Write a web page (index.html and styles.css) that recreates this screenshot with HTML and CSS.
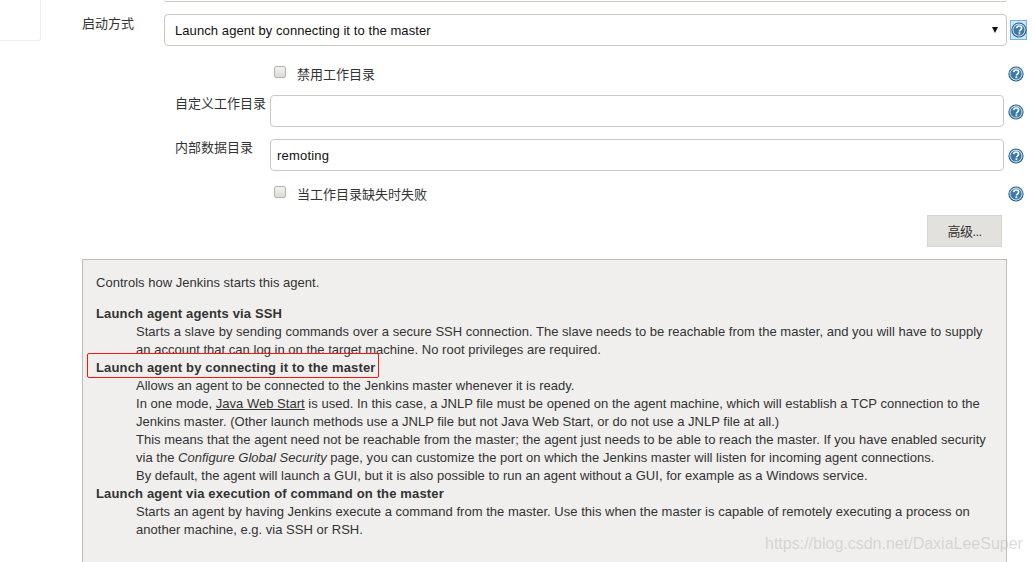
FILE: index.html
```html
<!DOCTYPE html>
<html lang="zh">
<head>
<meta charset="utf-8">
<title>Jenkins agent</title>
<link rel="stylesheet" href="styles.css">
</head>
<body>
<svg class="defs" width="0" height="0" aria-hidden="true">
  <symbol id="help" viewBox="0 0 16 16">
    <circle cx="8" cy="8" r="7.6" fill="#1d5a86"/>
    <circle cx="8" cy="8" r="6.5" fill="#e8f0f5"/>
    <circle cx="8" cy="8" r="5.6" fill="#3a79a8"/>
    <path d="M5.6 6.2C5.8 4.7 6.8 4 8.1 4c1.500 0 2.500 .9 2.500 2.100 0 1-.6 1.500-1.300 2-.6.4-.8.7-.8 1.400" fill="none" stroke="#fff" stroke-width="1.700"/>
    <rect x="7.500" y="10.400" width="1.800" height="1.800" fill="#fff"/>
  </symbol>
</svg>
<div class="page">
  <aside class="side"></aside>
  <main class="main">
    <div class="prev-input"></div>
    <div class="row launch-row">
      <label class="launch-label">启动方式</label>
      <div class="select">
        <span>Launch agent by connecting it to the master</span>
        <span class="caret"></span>
      </div>
      <span class="help-focus"><svg class="help"><use href="#help"/></svg></span>
    </div>
    <div class="sub">
      <div class="row check-row first-check">
        <span class="checkbox"></span>
        <span class="check-text">禁用工作目录</span>
        <svg class="help"><use href="#help"/></svg>
      </div>
      <div class="row field-row custom-row">
        <label class="field-label">自定义工作目录</label>
        <div class="input"></div>
        <svg class="help"><use href="#help"/></svg>
      </div>
      <div class="row field-row data-row">
        <label class="field-label">内部数据目录</label>
        <div class="input">remoting</div>
        <svg class="help"><use href="#help"/></svg>
      </div>
      <div class="row check-row last-check">
        <span class="checkbox"></span>
        <span class="check-text">当工作目录缺失时失败</span>
        <svg class="help"><use href="#help"/></svg>
      </div>
    </div>
    <div class="advanced"><button class="adv-btn">高级...</button></div>
    <section class="help-box">
      <p class="intro">Controls how Jenkins starts this agent.</p>
      <dl class="defs-list">
        <dt>Launch agent agents via SSH</dt>
        <dd>Starts a slave by sending commands over a secure SSH connection. The slave needs to be reachable from the master, and you will have to supply<br>an account that can log in on the target machine. No root privileges are required.</dd>
        <dt class="marked">Launch agent by connecting it to the master</dt>
        <dd>Allows an agent to be connected to the Jenkins master whenever it is ready.<br>
        In one mode, <a href="#">Java Web Start</a> is used. In this case, a JNLP file must be opened on the agent machine, which will establish a TCP connection to the<br>Jenkins master. (Other launch methods use a JNLP file but not Java Web Start, or do not use a JNLP file at all.)<br>
        This means that the agent need not be reachable from the master; the agent just needs to be able to reach the master. If you have enabled security<br>via the <i>Configure Global Security</i> page, you can customize the port on which the Jenkins master will listen for incoming agent connections.<br>
        By default, the agent will launch a GUI, but it is also possible to run an agent without a GUI, for example as a Windows service.</dd>
        <dt>Launch agent via execution of command on the master</dt>
        <dd>Starts an agent by having Jenkins execute a command from the master. Use this when the master is capable of remotely executing a process on<br>another machine, e.g. via SSH or RSH.</dd>
      </dl>
    </section>
  </main>
</div>
<div class="watermark">https://blog.csdn.net/DaxiaLeeSuper</div>
</body>
</html>
```
FILE: styles.css
```css
html, body {
  margin: 0;
  padding: 0;
  height: 562px;
  overflow: hidden;
  background: #fff;
}
body {
  position: relative;
  font-family: "Liberation Sans", "Noto Sans CJK SC", sans-serif;
  font-size: 13px;
  color: #333;
}
.defs { position: absolute; }
.page { display: flex; align-items: flex-start; }
.side {
  width: 40px;
  height: 40px;
  flex: none;
  border-right: 1px solid #eeeeec;
  border-bottom: 1px solid #eeeeec;
  border-bottom-right-radius: 3px;
}
.main {
  margin-left: 41px;
  width: 925px;
  display: flex;
  flex-direction: column;
}
.prev-input {
  margin-left: 82px;
  height: 1px;
  width: 843px;
  border-bottom: 1px solid #ccc9c4;
  border-radius: 0 0 4px 4px;
}
.row { display: flex; }
.launch-row { margin-top: 12px; height: 32px; }
.launch-label {
  width: 82px;
  flex: none;
  padding-top: 1px;
  line-height: 18px;
  font-size: 13px;
}
.select {
  width: 843px;
  flex: none;
  box-sizing: border-box;
  height: 32px;
  border: 1px solid #ccc9c4;
  border-radius: 4px;
  padding: 0 8px 0 10px;
  display: flex;
  align-items: center;
  justify-content: space-between;
  color: #111;
  font-size: 13px;
  letter-spacing: .08px;
}
.caret {
  width: 0;
  height: 0;
  border-left: 3px solid transparent;
  border-right: 3px solid transparent;
  border-top: 6px solid #111;
}
.help-focus {
  flex: none;
  margin: 6px 0 0 3px;
  width: 15px;
  height: 18px;
  border: 1px solid #6db3f2;
  background: #cfe6fb;
  display: flex;
  align-items: center;
  justify-content: center;
}
.help { width: 16px; height: 16px; flex: none; }
.sub { margin-left: 93px; width: 849px; display: flex; flex-direction: column; }
.check-row { align-items: center; height: 20px; padding-left: 99px; }
.first-check { margin-top: 18px; }
.last-check { margin-top: 13px; }
.checkbox {
  width: 10px;
  height: 10px;
  flex: none;
  margin-top: -5px;
  border: 1px solid #b5b3ae;
  border-radius: 2px;
  background: linear-gradient(#f2f2f0, #dcdbd8);
}
.check-text { margin: -2px 0 0 11px; font-size: 13px; flex: 1; }
.field-row { height: 32px; }
.custom-row { margin-top: 11px; }
.data-row { margin-top: 12px; }
.field-label { width: 95px; flex: none; line-height: 18px; }
.input {
  width: 734px;
  height: 32px;
  flex: none;
  box-sizing: border-box;
  border: 1px solid #ccc9c4;
  border-radius: 4px;
  padding: 1px 6px 0;
  line-height: 30px;
  color: #111;
  font-size: 13px;
  letter-spacing: .2px;
}
.field-row .help { margin: 9px 0 0 4px; }
.advanced { display: flex; justify-content: flex-end; margin-top: 11px; padding-right: 5px; }
.adv-btn {
  width: 75px;
  height: 32px;
  padding: 0 0 2px;
  border: 1px solid #d6d4ce;
  background: #e3e1dd;
  color: #333;
  font: 13px "Liberation Sans", "Noto Sans CJK SC", sans-serif;
  letter-spacing: -.6px;
}
.help-box {
  position: relative;
  margin-top: 12px;
  box-sizing: border-box;
  width: 925px;
  height: 320px;
  border: 1px solid #bdbcb8;
  background: #f0efed;
  padding: 14px 13px 0;
  line-height: 18px;
  font-size: 13px;
  letter-spacing: .02px;
  white-space: nowrap;
}
.intro { margin: 0 0 13px; }
.defs-list { margin: 0; }
.defs-list dt { font-weight: bold; font-size: 13px; letter-spacing: .15px; }
.defs-list dd { margin: 0 0 0 40px; }
.marked { position: relative; }
.marked::after {
  content: "";
  position: absolute;
  left: -9px;
  top: -6px;
  width: 290px;
  height: 23px;
  border: 1px solid #f5160c;
  border-radius: 2px;
}
.help-box a { color: #333; text-decoration: underline; }
.watermark {
  position: absolute;
  left: 765px;
  top: 534px;
  color: rgba(190, 190, 190, .55);
  font-size: 16px;
  line-height: 20px;
  white-space: nowrap;
}
```
